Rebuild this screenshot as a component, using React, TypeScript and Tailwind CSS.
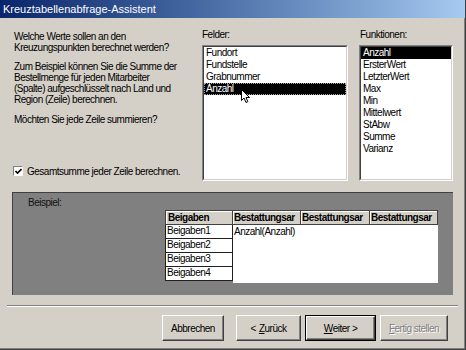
const ui = "font-['Liberation_Sans',Arial,sans-serif]";

const felder = ["Fundort", "Fundstelle", "Grabnummer", "Anzahl"];
const funktionen = ["Anzahl", "ErsterWert", "LetzterWert", "Max", "Min", "Mittelwert", "StAbw", "Summe", "Varianz"];

function ListBox({ items, selected, focus, width }: { items: string[]; selected: string; focus?: boolean; width: string }) {
  return (
    <div className={`${width} h-[136px] border border-t-[#808080] border-l-[#808080] border-r-white border-b-white`}>
      <div className="h-full bg-white border border-t-[#404040] border-l-[#404040] border-r-[#d4d0c8] border-b-[#d4d0c8]">
        {items.map((it) => (
          <div
            key={it}
            className={
              it === selected
                ? `h-[12px] leading-[12px] px-[2px] bg-black text-white ${focus ? "outline outline-1 outline-dotted outline-[#a0a0a0] -outline-offset-1" : ""}`
                : "h-[12px] leading-[12px] px-[2px]"
            }
          >
            {it}
          </div>
        ))}
      </div>
    </div>
  );
}

function Button({ children, w, def, disabled }: { children: React.ReactNode; w: string; def?: boolean; disabled?: boolean }) {
  const inner = (
    <div
      className={`h-full flex items-center justify-center border border-t-white border-l-white border-r-[#404040] border-b-[#404040] shadow-[inset_-1px_-1px_0_#808080] ${
        disabled ? "text-[#808080] [text-shadow:1px_1px_0_#ffffff]" : ""
      }`}
    >
      {children}
    </div>
  );
  if (def) return <div className={`${w} h-[26px] border border-black`}>{inner}</div>;
  return <div className={`${w} h-[26px]`}>{inner}</div>;
}

export default function App() {
  return (
    <div className={`${ui} relative w-[466px] h-[350px] overflow-hidden bg-[#d4d0c8] text-[10px] tracking-[-0.5px] text-black border-r border-b border-[#404040] shadow-[inset_-1px_-1px_0_#808080]`}>
      <div className="h-[18px] pl-[3px] leading-[18px] bg-linear-to-r from-[#0a246a] to-[#a6caf0] text-white text-[11px] tracking-normal">
        Kreuztabellenabfrage-Assistent
      </div>

      <div className="flex h-[174px]">
        <div className="w-[202px] pl-[14px] pt-[13px] flex flex-col leading-[11px]">
          <p>
            Welche Werte sollen an den
            <br />
            Kreuzungspunkten berechnet werden?
          </p>
          <p className="mt-[8px]">
            Zum Beispiel können Sie die Summe der
            <br />
            Bestellmenge für jeden Mitarbeiter
            <br />
            (Spalte) aufgeschlüsselt nach Land und
            <br />
            Region (Zeile) berechnen.
          </p>
          <p className="mt-[9px]">Möchten Sie jede Zeile summieren?</p>
          <div className="mt-auto mb-[15px] flex items-center h-[12px] -ml-[1px]">
            <div className="w-[10px] h-[10px] bg-white border border-t-[#808080] border-l-[#808080] border-r-white border-b-white flex items-center justify-center">
              <svg width="7" height="7" viewBox="0 0 7 7">
                <path d="M0.5 3 L2.5 5 L6.5 1" stroke="#000" strokeWidth="1.6" fill="none" />
              </svg>
            </div>
            <span className="ml-[4px]">Gesamtsumme jeder Zeile berechnen.</span>
          </div>
        </div>

        <div className="w-[147px] pt-[11px] flex flex-col">
          <div className="h-[11px] leading-[11px]">Felder:</div>
          <div className="mt-[5px]">
            <ListBox items={felder} selected="Anzahl" focus width="w-[146px]" />
          </div>
        </div>

        <div className="ml-[10px] w-[94px] pt-[11px] flex flex-col">
          <div className="h-[11px] leading-[11px] pl-[1px]">Funktionen:</div>
          <div className="mt-[5px]">
            <ListBox items={funktionen} selected="Anzahl" width="w-[94px]" />
          </div>
        </div>
      </div>

      <div className="mx-[12px] h-[103px] bg-[#808080] border-t border-l border-[#404040] flex flex-col overflow-hidden">
        <div className="mt-[4px] ml-[15px] h-[11px] leading-[11px] text-[#111]">Beispiel:</div>
        <div className="mt-[2px] ml-[152px] flex">
          <div className="w-[68px] flex flex-col">
            <div className="h-[15px] leading-[13px] px-[2px] bg-[#d4d0c8] font-bold border border-[#404040] shadow-[inset_1px_1px_0_#ffffff]">Beigaben</div>
            {["Beigaben1", "Beigaben2", "Beigaben3", "Beigaben4"].map((b) => (
              <div key={b} className="h-[14px] leading-[12px] pl-[1px] bg-white border border-t-0 border-[#202020]">
                {b}
              </div>
            ))}
          </div>
          <div className="w-[205px] flex flex-col">
            <div className="flex">
              {["w-[68px]", "w-[69px]", "w-[68px]"].map((w, i) => (
                <div
                  key={i}
                  className={`${w} h-[15px] leading-[13px] px-[1px] bg-[#d4d0c8] font-bold border border-l-0 border-[#404040] shadow-[inset_1px_1px_0_#ffffff] overflow-hidden whitespace-nowrap`}
                >
                  Bestattungsar
                </div>
              ))}
            </div>
            <div className="h-[58px] bg-white leading-[14px] pl-[1px]">Anzahl(Anzahl)</div>
          </div>
        </div>
      </div>

      <div className="mx-[7px] mt-[10px] h-[2px] border-t border-t-[#808080] border-b border-b-white" />

      <div className="mt-[8px] pl-[162px] flex">
        <Button w="w-[62px]">Abbrechen</Button>
        <div className="ml-[12px]">
          <Button w="w-[65px]">
            &lt; <span className="underline ml-[3px]">Z</span>urück
          </Button>
        </div>
        <div className="ml-[4px]">
          <Button w="w-[71px]" def>
            <span className="underline">W</span>eiter &gt;
          </Button>
        </div>
        <div className="ml-[4px]">
          <Button w="w-[68px]" disabled>
            <span className="underline">F</span>ertig stellen
          </Button>
        </div>
      </div>

      <svg className="absolute left-[241px] top-[89px]" width="10" height="15" viewBox="0 0 10 15">
        <path d="M0.5 0.5 L0.5 11.5 L3 9 L5 13.5 L6.8 12.7 L5 8.5 L8.5 8.5 Z" fill="#fff" stroke="#000" strokeWidth="1" />
      </svg>
    </div>
  );
}
